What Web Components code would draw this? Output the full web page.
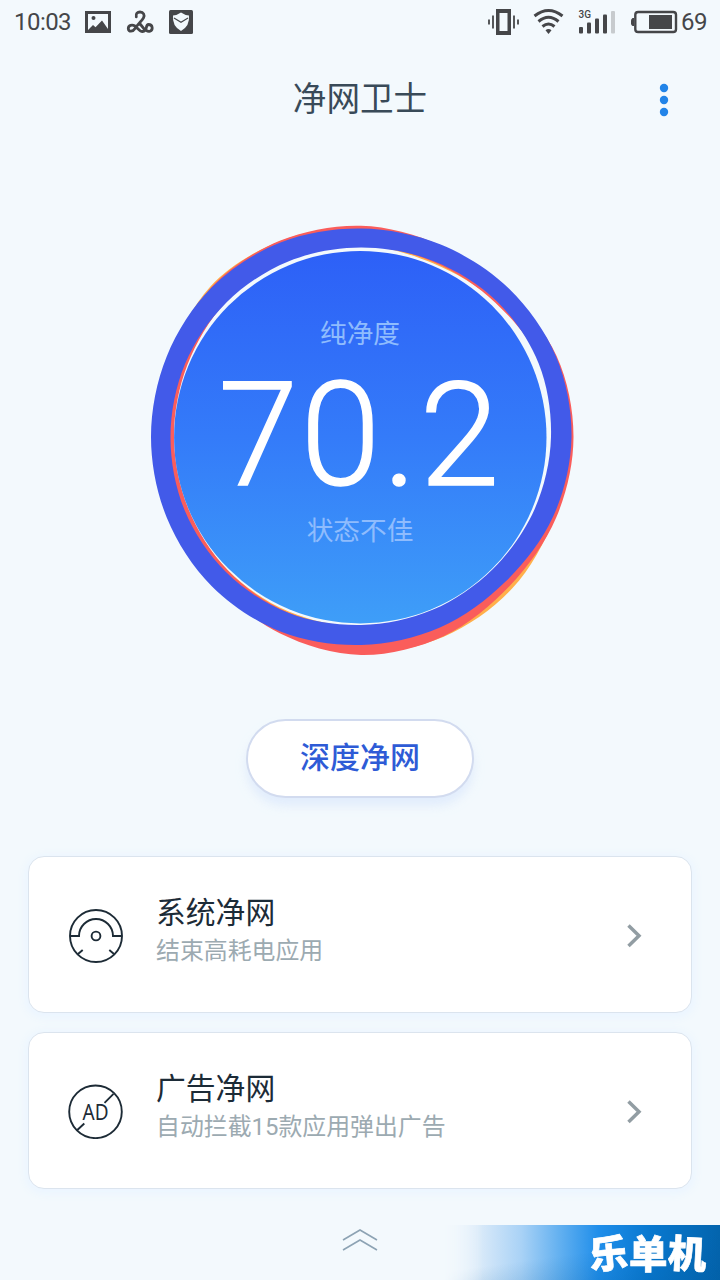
<!DOCTYPE html>
<html lang="zh-CN">
<head>
<meta charset="utf-8">
<title>净网卫士</title>
<style>
html,body{margin:0;height:100%}
body{background:#f3f9fd;font-family:Roboto,"Noto Sans CJK SC",sans-serif;color:#1e2d38;overflow:hidden}
</style>
</head>
<body>
<clean-app></clean-app>
<script>
const define = (name, html, init) => {
  const t = document.createElement('template');
  t.innerHTML = html;
  customElements.define(name, class extends HTMLElement {
    constructor() {
      super();
      this.attachShadow({mode: 'open'}).appendChild(t.content.cloneNode(true));
      if (init) init(this.shadowRoot);
    }
  });
};

define('status-bar', `
<style>
:host{display:flex;justify-content:space-between;align-items:center;height:44px;padding:0 13px 0 14px;box-sizing:border-box;color:#454649;font-size:24px;line-height:44px}
div{display:flex;align-items:center}
svg{display:block;flex:none}
</style>
<div><span style="width:70px;letter-spacing:-.55px">10:03</span>
<svg width="110" height="30" viewBox="84 7 110 30">
<path d="M85 11h26v22H85z M88 14v16h20V14z" fill="#454649" fill-rule="evenodd"/><path d="M88 30h20v-1l-6-8.500-6.500 6.800-2.500-2.300z" fill="#454649"/><circle cx="93.500" cy="18" r="2" fill="#454649"/>
<g fill="none" stroke="#454649" stroke-width="2.800" stroke-linecap="round" stroke-linejoin="round"><path d="M136.300 16.800C135.500 13.500 137.500 12 140 12C143.500 12 145 15 143.500 17.800C142 20.500 138 24 135 28.500C133 31.800 128.500 32.300 128.300 28.700C128.200 25.300 132 24.300 135 26C137.500 27.500 139 31.500 142.500 31.500C148 31 145 24.700 148.500 24.500C153 24.500 153.200 30 150 31.200C147.500 32.200 145.500 30.500 143.500 28.200L139.300 23"/></g>
<rect x="169" y="10" width="24" height="24" rx="1.500" fill="#454649"/><path d="M181 12.500Q185 15.300 189 15.500Q190 26 181 31Q172 26 173 15.500Q177 15.300 181 12.500Z" fill="#f3f9fd"/><path d="M174 18l7 4.200 7-4.200" fill="none" stroke="#454649" stroke-width="1.200"/>
</svg></div>
<div>
<svg width="194" height="30" viewBox="487 7 194 30" fill="#454649">
<path d="M496 9h15v26h-15z M499.500 13v18h8v-18z" fill-rule="evenodd"/>
<path d="M489 19.500v5M493 15.500v13M514 15.500v13M518 19.500v5" stroke="#454649" stroke-width="1.800"/>
<g fill="none" stroke="#454649" stroke-width="3"><path d="M534.500 16Q548.500 5 562.500 16"/><path d="M538.500 21.500Q548.500 13 558.500 21.500"/><path d="M542.500 26.500Q548.500 21.500 554.500 26.500"/></g><path d="M545.500 30.300Q548.500 27.800 551.500 30.300L548.500 34z"/>
<text x="578.500" y="18" font-family="Roboto" font-size="10" font-weight="500">3G</text>
<rect x="579" y="27" width="4" height="6.500" rx="1"/><rect x="587" y="22.500" width="4" height="11" rx="1"/><rect x="595" y="18.500" width="4" height="15" rx="1"/><rect x="603" y="14.500" width="4" height="19" rx="1"/><rect x="611" y="11" width="4" height="22.500" rx="1" fill="#c7cbce"/>
<rect x="635.300" y="12" width="40.700" height="20" rx="2.800" fill="none" stroke="#454649" stroke-width="2.400"/><path d="M634 18h-1.500q-1.500 1-1.500 2.500v3q0 1.500 1.500 2.500h1.500z"/><rect x="649" y="15" width="23" height="14"/>
</svg><span style="width:26px;letter-spacing:-.5px">69</span></div>`);

define('title-bar', `
<style>
:host{display:grid;grid-template-columns:112px 1fr 112px;align-items:center;height:110px}
h1{margin:2px 0 0;text-align:center;font-weight:400;font-size:33.6px;line-height:50px;color:#394a58}
svg{display:block;margin:2px auto 0}
</style><span></span><h1><slot></slot></h1>
<svg width="10" height="34" fill="#2284e8"><circle cx="5" cy="5" r="4.200"/><circle cx="5" cy="17" r="4.200"/><circle cx="5" cy="29" r="4.200"/></svg>`);

// Each ring edge is a closed spline through 16 radii, clockwise from east.
const spline = radii => {
  const n = radii.length;
  const p = radii.map((r, i) => [361 + r * Math.cos(i * 2 * Math.PI / n), 437 + r * Math.sin(i * 2 * Math.PI / n)]);
  let d = `M${p[0]}`;
  for (let i = 0; i < n; i++) {
    const a = p[(i + n - 1) % n], b = p[i], c = p[(i + 1) % n], e = p[(i + 2) % n];
    d += `C${b[0] + (c[0] - a[0]) / 6},${b[1] + (c[1] - a[1]) / 6} ${c[0] - (e[0] - b[0]) / 6},${c[1] - (e[1] - b[1]) / 6} ${c}`;
  }
  return d + 'Z';
};
const RINGS = {
  orange: [[210,209.5,214,216.2,216,211,206,206,206,206,213,212,210,207,206,208],
           [195,195,192,192,190,189,188.3,188,188,189,191,192,191.5,188,191,195]],
  red: [[212.5,211.2,210.5,215.7,218,212.5,206,206,206,206,211.8,212.3,211.3,207.5,206,211.7],
        [195,195,192,192,190,190,188.5,187,187,188,191,192,192,189.3,190,195]],
  blue: [[210.5,208,204.5,206.3,208,210.5,211,210.3,210,210.3,211.3,210.5,208.5,208.3,209.5,211],
         [190,188,186.5,187,188,190.3,191,191,190.5,190.5,190.3,190,189.5,190.3,192,192.3]]
};
define('score-dial', `
<style>
:host{display:grid;width:440px;height:440px;margin:0 auto}
svg,.text{grid-area:1/1}
svg{display:block}
.text{display:flex;flex-direction:column;align-items:center;color:#fff}
.label,.state{font-weight:400;font-size:26.700px;line-height:36px;color:#8fbcfd}
.label{margin-top:98px}
.score{font-size:144px;font-weight:350;line-height:150px;margin-top:9px;letter-spacing:2.300px;-webkit-text-stroke:1.400px #fff}
.state{margin-top:2px}
</style>
<svg width="440" height="440" viewBox="140 218 440 440">
<defs><linearGradient id="disc" x2="0" y2="1"><stop stop-color="#2d60f7"/><stop offset=".5" stop-color="#347bf9"/><stop offset="1" stop-color="#3e9ef8"/></linearGradient></defs>
<g fill-rule="evenodd"><path id="orange" fill="#ffb04b"/><path id="red" fill="#fa5d5b"/><path id="blue" fill="#425ae9"/></g>
<circle cx="360.300" cy="437.200" r="186.200" fill="url(#disc)"/>
</svg>
<div class="text"><span class="label">纯净度</span><span class="score">70.2</span><span class="state">状态不佳</span></div>`,
root => {
  for (const [id, edges] of Object.entries(RINGS))
    root.getElementById(id).setAttribute('d', edges.map(spline).join(''));
});

define('pill-button', `
<style>
:host{display:block;width:228px;height:79px;margin:0 auto}
button{display:block;width:100%;height:100%;border:2px solid #d2dbef;border-radius:40px;background:#fff;box-shadow:0 8px 10px #d5e3fb90;color:#2e5bd6;font:500 30px/74px Roboto,"Noto Sans CJK SC",sans-serif;padding:0 0 2px}
</style><button><slot></slot></button>`);

define('feature-card', `
<style>
:host{display:grid;grid-template-columns:56px 1fr 16px;column-gap:32px;align-items:center;height:157px;box-sizing:border-box;padding:0 49px 0 39px;border:1px solid #dbe4ee;border-radius:16px;background:#fff;box-shadow:0 2px 8px 3px #ebf5ff}
.copy{margin-top:-8px}
.name{display:block;font-weight:400;font-size:29.800px;line-height:40px;color:#1c2b37}
.note{display:block;font-weight:400;font-size:23.900px;line-height:36px;color:#9caab1;white-space:nowrap}
svg{display:block}
</style>
<slot name="icon"></slot>
<div class="copy"><span class="name"><slot name="name"></slot></span><span class="note"><slot></slot></span></div>
<svg width="16" height="26" viewBox="0 0 16 26"><path d="M2.500 3.500l10.500 10.300L2.500 24.100" fill="none" stroke="#929da3" stroke-width="3.500"/></svg>`);

define('gauge-icon', `
<style>:host{display:block}svg{display:block}</style>
<svg width="56" height="56" viewBox="0 0 56 56" fill="none" stroke="#1d2b36" stroke-width="1.900"><circle cx="28" cy="29" r="26"/><path d="M2 29h9a17 17 0 0 1 34 0h9M9.700 47.300l5-4.300M46.300 47.300l-5-4.300"/><circle cx="28" cy="29" r="4.400"/></svg>`);

define('ad-icon', `
<style>:host{display:block}svg{display:block}</style>
<svg width="56" height="56" viewBox="0 0 56 56" fill="none" stroke="#1d2b36" stroke-width="1.900"><circle cx="27.500" cy="28.800" r="26.300"/><path d="M9.300 47l7-6.500M36.500 19.800l9-9"/><text x="14.600" y="37.300" font-family="Noto Sans, Noto Sans CJK SC" font-size="22.500" textLength="26" lengthAdjust="spacingAndGlyphs" stroke="none" fill="#1d2b36">AD</text></svg>`);

define('app-footer', `
<style>
:host{display:grid;grid-template-columns:276px 1fr 276px;height:55px;align-items:start}
.up{display:block;margin:2px auto 0}
.mark{width:276px;height:55px;display:flex;justify-content:flex-end;align-items:center;box-sizing:border-box;padding-right:13px;color:#fff;font:900 38.500px/53px "Noto Sans CJK SC",sans-serif;background:linear-gradient(172deg,transparent 50%,#00579c40 100%),linear-gradient(90deg,#f3f9fd 0,#dcebf9 12%,#a9d2f6 28%,#62b0f0 42%,#1f8eea 56%,#0878cf 75%,#0364ad 100%);-webkit-mask:linear-gradient(90deg,transparent,#000 14%);-webkit-text-stroke:.7px #fff}
.mark span{display:inline-block}
.mark span:nth-child(1){transform:translate(-2px,-1px) rotate(-5deg)}
.mark span:nth-child(2){transform:translate(-1px,-1px)}
.mark span:nth-child(3){transform:translateY(-1px) rotate(3deg)}
</style><span></span>
<svg class="up" width="36" height="26" fill="none" stroke="#8da3b4" stroke-width="1.600"><path d="M1 13L18 3l17 10M1 23L18 13l17 10"/></svg>
<div class="mark"><span>乐</span><span>单</span><span>机</span></div>`);

define('clean-app', `
<style>
:host{display:flex;flex-direction:column;width:720px;height:1280px}
score-dial{margin-top:64px}
pill-button{margin-top:61px}
main{display:flex;flex-direction:column;gap:19px;padding:58px 28px 0}
app-footer{margin-top:auto}
</style>
<status-bar></status-bar>
<title-bar>净网卫士</title-bar>
<score-dial></score-dial>
<pill-button>深度净网</pill-button>
<main>
<feature-card><gauge-icon slot="icon"></gauge-icon><span slot="name">系统净网</span>结束高耗电应用</feature-card>
<feature-card><ad-icon slot="icon"></ad-icon><span slot="name">广告净网</span>自动拦截15款应用弹出广告</feature-card>
</main>
<app-footer></app-footer>`);
</script>
</body>
</html>
